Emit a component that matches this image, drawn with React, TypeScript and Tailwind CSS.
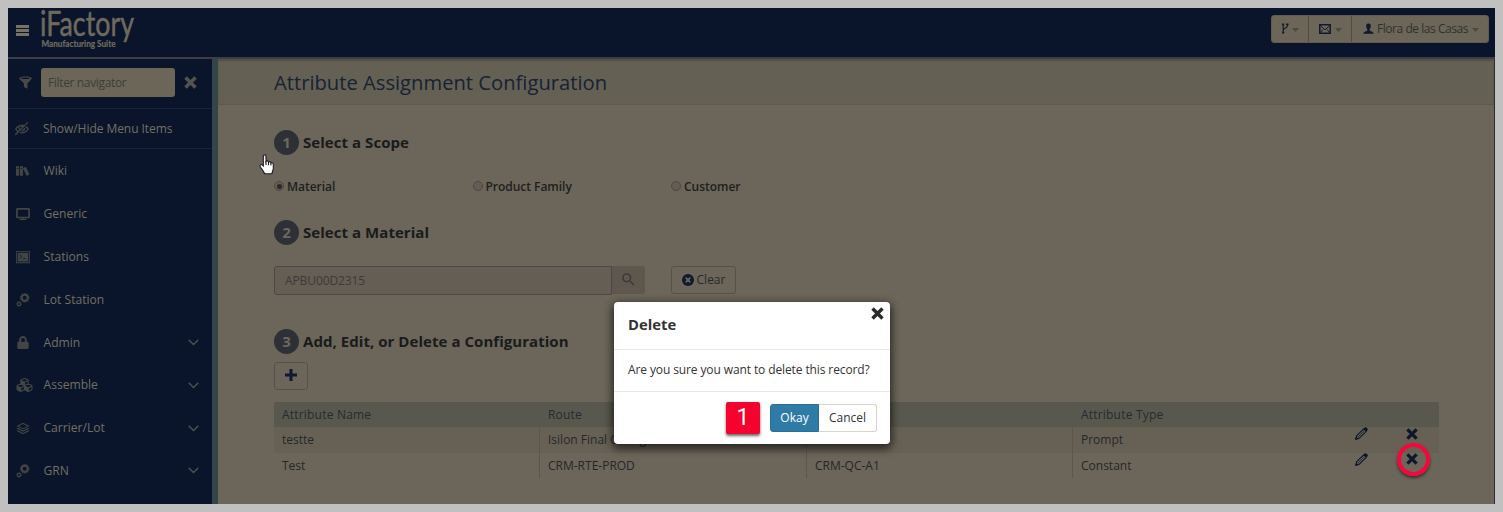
import React from "react";
import { FaLock, FaCubes } from "react-icons/fa";
import { ImBooks, ImEyeBlocked, ImTerminal, ImStack } from "react-icons/im";
import { MdSearch } from "react-icons/md";

function Cross({ className }: { className: string }) {
  return (
    <svg viewBox="0 0 12 12" className={className} fill="none" stroke="currentColor" strokeWidth="3.2">
      <path d="M1.4 1.4 10.6 10.6M10.6 1.4 1.4 10.6" />
    </svg>
  );
}

function Caret({ className }: { className: string }) {
  return (
    <svg viewBox="0 0 7 4" className={"h-[4px] w-[7px] text-[#4c4a45] " + className} fill="currentColor">
      <path d="M0 0h7L3.500 4Z" />
    </svg>
  );
}

function Funnel() {
  return (
    <svg viewBox="0 0 13 13" className="h-[13px] w-[13px]">
      <path d="M0.300 2.200C0.300 0 12.700 0 12.700 2.200c0 1-2 2.800-4.200 5v5.500L4.900 11V7.200C2.500 5 0.300 3.200 0.300 2.200Z" fill="currentColor" />
      <ellipse cx="6.500" cy="2.200" rx="4.600" ry="0.800" fill="#0a152b" />
    </svg>
  );
}

function Pencil() {
  return (
    <svg viewBox="0 0 13 13" className="h-[13px] w-[13px]" fill="none" stroke="currentColor" strokeWidth="1.200" strokeLinejoin="round">
      <path d="M0.800 12.200 1.800 8.700 8.700 1.800 11.200 4.300 4.300 11.200Z" />
      <path d="m9.300 1.600 1-0.800c0.500-0.300 2.200 1.200 1.900 1.900l-0.800 1Z" fill="currentColor" />
      <path d="M3.200 9.800 9.300 3.700" strokeWidth="0.700" />
      <path d="M0.800 12.200l0.500-1.600 1.100 1.100Z" fill="currentColor" />
    </svg>
  );
}

function Gears() {
  return (
    <svg viewBox="0 0 14 14" className="h-[14px] w-[14px]" fill="none" stroke="currentColor">
      <circle cx="8.7" cy="4.8" r="3.1" strokeWidth="2.2" />
      <circle cx="8.7" cy="4.8" r="4.4" strokeWidth="0.9" strokeDasharray="1.5 1.25" />
      <circle cx="3" cy="11" r="1.7" strokeWidth="1.2" />
      <circle cx="3" cy="11" r="2.5" strokeWidth="0.6" strokeDasharray="1 0.95" />
    </svg>
  );
}

function Display() {
  return (
    <svg viewBox="0 0 14 12" className="h-[12px] w-[14px]" fill="none" stroke="currentColor">
      <rect x="0.9" y="0.9" width="12.2" height="8.6" rx="0.6" strokeWidth="1.7" />
      <path d="M3.5 11.4h7M7 9.5v2" strokeWidth="1.2" />
    </svg>
  );
}

function Chevron() {
  return (
    <svg viewBox="0 0 11 7" className="h-[7px] w-[11px]" fill="none" stroke="#4f5050" strokeWidth="1.4">
      <path d="m0.7 0.8 4.8 4.7L10.3 0.8" />
    </svg>
  );
}

function Logo() {
  return (
    <svg viewBox="0 0 100 48" className="h-[48px] w-[100px] overflow-visible" fill="#6f6a5e">
      <text x="-1" y="28" fontFamily="Lato, sans-serif" fontSize="34" textLength="94" lengthAdjust="spacingAndGlyphs" stroke="#6f6a5e" strokeWidth="0.5" strokeLinejoin="round">
        iFactory
      </text>
      <text x="0.5" y="39" fontFamily="Lato, sans-serif" fontSize="9" fontWeight="700" textLength="74" lengthAdjust="spacingAndGlyphs" stroke="#6f6a5e" strokeWidth="0.200">
        Manufacturing Suite
      </text>
    </svg>
  );
}

const items = [
  { label: "Wiki", icon: <ImBooks className="h-[14px] w-[14px]" />, open: false },
  { label: "Generic", icon: <Display />, open: false },
  { label: "Stations", icon: <ImTerminal className="h-[14px] w-[14px]" />, open: false },
  { label: "Lot Station", icon: <Gears />, open: false },
  { label: "Admin", icon: <FaLock className="ml-px h-[13px] w-[12px]" />, open: true },
  { label: "Assemble", icon: <FaCubes className="h-[16px] w-[17px]" />, open: true },
  { label: "Carrier/Lot", icon: <ImStack className="h-[13px] w-[14px]" />, open: true },
  { label: "GRN", icon: <Gears />, open: true },
];

function Sidebar() {
  return (
    <aside className="w-[210px] shrink-0 border-r-[6px] border-[#33454a] bg-[#0a152b] text-[#746f63]">
      <div className="flex h-[50px] items-center border-b border-[#15263a] pb-[2px] pl-[11px] text-[#494847]">
        <Funnel />
        <div className="ml-[9px] flex h-[29px] w-[134px] items-center rounded-[3px] bg-[#6c6659] pl-[7px] text-[12px] tracking-[-0.35px] text-[#3d3d3b]">Filter navigator</div>
        <Cross className="ml-[9px] h-[13px] w-[13px] text-[#55534f]" />
      </div>
      <div className="flex h-[40px] items-center border-b border-[#15263a] pl-[7px]">
        <ImEyeBlocked className="h-[14px] w-[14px] text-[#434544]" />
        <span className="ml-[14px] text-[12px] tracking-[-0.05px]">Show/Hide Menu Items</span>
      </div>
      <div className="pt-px">
        {items.map((item) => (
          <div key={item.label} className="flex h-[42.800px] items-center pl-2">
            <span className="flex w-[27.500px] text-[#434544]">{item.icon}</span>
            <span className="flex-1 text-[12.1px]">{item.label}</span>
            {item.open && (
              <span className="mr-[13px]">
                <Chevron />
              </span>
            )}
          </div>
        ))}
      </div>
    </aside>
  );
}

function Header() {
  return (
    <header className="flex h-[51px] shrink-0 border-b-2 border-[#3e3c44] bg-[#0a152b] pr-1.5">
      <div className="ml-2 mt-[17px] flex h-[11px] w-[13px] flex-col gap-px">
        <i className="h-[3px] bg-[#777267]" />
        <i className="h-[3px] bg-[#777267]" />
        <i className="h-[3px] bg-[#777267]" />
      </div>
      <div className="ml-[12px]">
        <Logo />
      </div>
      <div className="ml-auto mt-[7px] flex h-[28px] items-center rounded-[3px] border border-[#625b50] bg-[#6c6659] text-[12px] text-[#30312f]">
        <div className="flex h-full w-[37px] items-center justify-center gap-[3px] border-r border-[#514c43]">
          <svg viewBox="0 0 8 12" className="mb-0.5 h-[11px] w-[8px]" fill="none" stroke="#11192d" strokeWidth="1.2">
            <path d="M2 2v8M6.5 2v1.5C6.5 5.8 2.4 5.2 2 8" />
            <path d="M0.8 1.5h2.4M0.8 10.5h2.4M5.2 1.5h2.6" strokeWidth="2" />
          </svg>
          <Caret className="mt-px" />
        </div>
        <div className="flex h-full w-[43px] items-center justify-center gap-[4px] border-r border-[#514c43]">
          <svg viewBox="0 0 12 10" className="mb-px h-[10px] w-[12px]" fill="none" stroke="#11192d" strokeWidth="1.5">
            <path d="M0.8 0.8h10.4v8.4H0.8Z" />
            <path d="m1.500 1.800 4.500 4 4.500-4M1.500 8.500l2.500-3M10.500 8.500 8 5.500" strokeWidth="1" />
          </svg>
          <Caret className="mt-px" />
        </div>
        <div className="flex h-full w-[136px] items-center pl-[11px]">
          <svg viewBox="0 0 12 12" className="h-[12px] w-[11px]" fill="#11192d">
            <path d="M6 0C4 0 3.300 1.400 3.500 3.200 3.700 4.800 4.300 5.600 4.700 6.200v1.300C3 8.500 0.500 9.200 0.200 11.200h11.600C11.500 9.200 9 8.500 7.300 7.500V6.200c0.400-0.600 1-1.400 1.200-3C8.700 1.400 8 0 6 0Z" />
          </svg>
          <span className="ml-[3px] tracking-[-0.45px]">Flora de las Casas</span>
          <Caret className="ml-[4px] mt-px" />
        </div>
      </div>
    </header>
  );
}

function Step({ n, children }: { n: number; children: React.ReactNode }) {
  return (
    <div className="flex h-[25px] items-center text-[15px] font-bold tracking-[0.05px] text-[#191b1d]">
      <span className="mr-[4px] flex h-[25px] w-[25px] items-center justify-center rounded-full bg-[#2d3036] text-[15px] text-[#6d685e]">{n}</span>
      {children}
    </div>
  );
}

function Radio({ label, checked }: { label: string; checked?: boolean }) {
  return (
    <div className="flex w-[198.500px] items-center text-[12px] font-semibold tracking-[-0.03px] text-[#1d1f20]">
      <span className="mb-0.5 mr-[3px] flex h-[10px] w-[10px] items-center justify-center rounded-full border border-[#4d4942] bg-[#625e55]">
        {checked && <i className="h-[5px] w-[5px] rounded-full bg-[#29292a]" />}
      </span>
      {label}
    </div>
  );
}

function Row({ cells, striped, marked }: { cells: string[]; striped?: boolean; marked?: boolean }) {
  return (
    <div className={"grid grid-cols-[266px_267px_266px_366px] text-[12px] text-[#24272a] " + (striped ? "bg-[#676155]" : "bg-[#6c6559]")}>
      {cells.map((cell, i) => (
        <div key={i} className={"flex h-[25.500px] items-center pl-2 " + (i < 3 ? "border-r border-[#5c564d]" : "")}>
          <span className="flex-1 pt-px">{cell}</span>
          {i === 3 && (
            <div className="mb-3 flex items-center text-[#0d172b]">
              <Pencil />
              <span className="relative ml-[38px] mr-[21px] h-[12px] w-[12px]">
                <Cross className="h-[12px] w-[12px]" />
                {marked && <i className="absolute -left-[9px] -top-[10px] h-[33px] w-[33px] rounded-full border-4 border-[#f6063c] shadow-[0_2px_3px_#0008]" />}
              </span>
            </div>
          )}
        </div>
      ))}
    </div>
  );
}

function Dialog() {
  return (
    <div className="absolute left-[614px] top-[302px] flex h-[142px] w-[276px] flex-col rounded-[4px] bg-white text-[12px] text-[#333] shadow-[0_3px_9px_2px_#0009]">
      <Cross className="absolute right-[6px] top-[5px] h-[13px] w-[13px] text-[#2b2b2b]" />
      <div className="flex h-[48px] items-center border-b border-[#e9e6dd] pb-[2px] pl-[14px] text-[14.8px] font-bold">Delete</div>
      <div className="flex h-[42px] items-center border-b border-[#e9e6dd] pb-px pl-[14px] tracking-[-0.11px]">Are you sure you want to delete this record?</div>
      <div className="flex flex-1 items-center justify-end pr-[13px]">
        <div className="mr-[10px] flex h-[32px] w-[34px] items-center justify-center rounded-[2px] bg-[#f4032f] font-['Roboto',sans-serif] text-[23px] text-white shadow-[0_2px_3px_#0009]">1</div>
        <div className="flex h-[28px] w-[49px] items-center justify-center rounded-l-[3px] border border-[#28709b] bg-[#2e7ba6] text-white">Okay</div>
        <div className="flex h-[28px] w-[58px] items-center justify-center rounded-r-[3px] border border-l-0 border-[#dbd3c6]">Cancel</div>
      </div>
    </div>
  );
}

export default function App() {
  return (
    <div className="relative h-[512px] w-[1503px] overflow-hidden bg-[#c0c0c0] p-2 font-['Open_Sans',sans-serif]">
      <div className="flex h-full flex-col overflow-hidden">
        <Header />
        <div className="flex min-h-0 flex-1">
          <Sidebar />
          <main className="flex-1 border-r border-[#272b34] bg-[#6c6559]">
            <div className="flex h-[46px] items-center border-b border-[#5d5a50] bg-[#646054] pl-[56px] pt-px text-[20.2px] text-[#172234] shadow-[inset_0_2px_2px_#55514a]">Attribute Assignment Configuration</div>
            <div className="flex flex-col pl-[56px] pt-[25px]">
              <Step n={1}>Select a Scope</Step>
              <div className="mt-[23px] flex h-[18px]">
                <Radio label="Material" checked />
                <Radio label="Product Family" />
                <Radio label="Customer" />
              </div>
              <div className="mt-[24px]">
                <Step n={2}>Select a Material</Step>
              </div>
              <div className="mt-[21px] flex text-[12px]">
                <div className="flex h-[29px] w-[338px] items-center rounded-l-[3px] border border-[#4d4942] bg-[#655e54] pl-[10px] tracking-[-0.1px] text-[#3b3b39]">APBU00D2315</div>
                <div className="flex h-[28px] w-[33px] items-center justify-center rounded-r-[3px] bg-[#5f574e] pb-0.5 text-[#37373a]">
                  <MdSearch className="h-[17px] w-[17px]" />
                </div>
                <div className="ml-[26px] flex h-[28px] w-[65px] items-center justify-center gap-[3px] rounded-[3px] border border-[#575147] text-[#25282a]">
                  <svg viewBox="0 0 12 12" className="mb-px h-[12px] w-[12px]">
                    <circle cx="6" cy="6" r="6" fill="#0f1930" />
                    <path d="m3.700 3.700 4.600 4.600m0-4.600-4.600 4.600" stroke="#6c6559" strokeWidth="1.8" />
                  </svg>
                  Clear
                </div>
              </div>
              <div className="mt-[34px]">
                <Step n={3}>Add, Edit, or Delete a Configuration</Step>
              </div>
              <div className="mt-[8px] flex h-[28px] w-[34px] items-center justify-center rounded-[3px] border border-[#575147]">
                <svg viewBox="0 0 12 12" className="mb-[3px] h-[12px] w-[12px]" stroke="#0f1930" strokeWidth="3">
                  <path d="M0 6h12M6 0v12" />
                </svg>
              </div>
              <div className="mt-[12px] w-[1165px]">
                <div className="grid h-[25px] grid-cols-[266px_267px_266px_366px] items-center bg-[#58584f] text-[12px] font-medium tracking-[0.2px] text-[#262b2f]">
                  <span className="pl-2">Attribute Name</span>
                  <span className="pl-2">Route</span>
                  <span />
                  <span className="pl-2">Attribute Type</span>
                </div>
                <Row cells={["testte", "Isilon Final Config", "", "Prompt"]} striped />
                <Row cells={["Test", "CRM-RTE-PROD", "CRM-QC-A1", "Constant"]} marked />
              </div>
            </div>
          </main>
        </div>
      </div>
      <Dialog />
      <svg viewBox="0 0 17 22" className="absolute left-[259px] top-[154px] h-[22px] w-[17px]" fill="white" stroke="#1c1c24" strokeWidth="1.100">
        <path d="M4.300 12V2.200C4.300 0.400 7 0.400 7 2.200V7.500C7.800 6.500 9.300 6.800 9.500 8c1-0.700 2.300-0.200 2.400 0.900 1.200-0.500 2.400 0.200 2.400 1.400v4c0 2-1.300 3-1.300 5.500H5.500C5.200 17.500 2.600 15 1.300 12.800 0.300 11 2.300 10 3.300 11Z" />
        <path d="M7 7v4M9.500 8v3.200M11.900 9v2.500" />
      </svg>
    </div>
  );
}
